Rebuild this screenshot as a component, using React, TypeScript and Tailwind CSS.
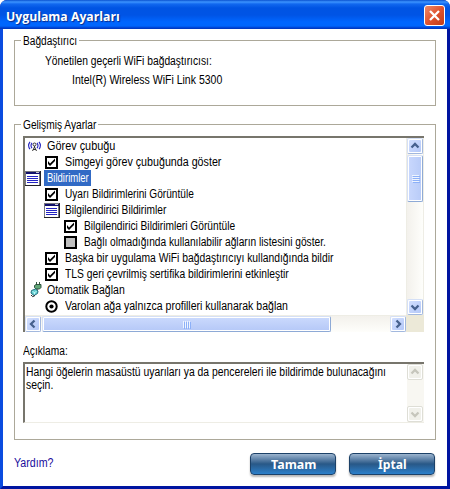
import { useLayoutEffect, useRef, useState, type ReactNode } from "react";

/** Single line label squeezed to the narrow widths of the dialog font. */
function Fit({ w, children, className = "" }: { w: number; children: string; className?: string }) {
  const ref = useRef<HTMLSpanElement>(null);
  const [scale, setScale] = useState(1);
  useLayoutEffect(() => {
    if (ref.current && ref.current.offsetWidth > 0) setScale(w / ref.current.offsetWidth);
  }, [w, children]);
  return (
    <span className={`block shrink-0 whitespace-nowrap ${className}`} style={{ width: w }}>
      <span ref={ref} className="inline-block origin-left" style={{ transform: `scaleX(${scale})` }}>
        {children}
      </span>
    </span>
  );
}

function Check({ off = false }: { off?: boolean }) {
  return (
    <svg width="13" height="13" viewBox="0 0 13 13" className="shrink-0">
      <rect x="1" y="1" width="11" height="11" fill={off ? "#c0c0c0" : "#fff"} stroke="#000" strokeWidth="2" />
      {!off && <path d="M3 5v3l2 2 5-5V2.500L5 7.500z" fill="#000" />}
    </svg>
  );
}

function Radio() {
  return (
    <svg width="13" height="13" viewBox="0 0 13 13" className="shrink-0">
      <circle cx="6.500" cy="6.500" r="5.200" fill="#fff" stroke="#000" strokeWidth="2" />
      <circle cx="6.500" cy="6.500" r="2.100" fill="#000" />
    </svg>
  );
}

function ListIcon() {
  return (
    <svg width="16" height="15" viewBox="0 0 16 15" className="shrink-0" shapeRendering="crispEdges">
      <rect width="16" height="15" fill="#222228" />
      <rect width="15" height="14" fill="#77777f" />
      <rect x="1" y="1" width="14" height="2" fill="#10106c" />
      <rect x="11" y="1" width="3" height="1" fill="#c8c8d8" />
      <rect x="1" y="3" width="13" height="11" fill="#fff" />
      <path d="M2 5.500h11M2 7.500h11M2 9.500h11M2 11.500h11" stroke="#2424c4" />
    </svg>
  );
}

function AntennaIcon() {
  return (
    <svg width="13" height="11" viewBox="0 0 13 11" className="shrink-0" fill="none">
      <path
        d="M2 .8Q-.8 4.500 2 8.200M4 1.800Q2 4.500 4 7.200M11 .8Q13.800 4.500 11 8.200M9 1.800Q11 4.500 9 7.200"
        stroke="#2222c0"
        strokeWidth="1.100"
      />
      <circle cx="6.500" cy="3.500" r="1.500" stroke="#333" />
      <path d="M6.500 5V7M6.500 6L4.500 10M6.500 6L8.500 10M5 8.500h3" stroke="#333" />
    </svg>
  );
}

function PlugIcon() {
  return (
    <svg width="12" height="16" viewBox="0 0 12 16" className="shrink-0">
      <path d="M6.500 0v3M9.500 0v3" stroke="#355c42" />
      <path d="M4.500 3.500L6 2.500h5v3L9.500 7H6L4.500 5.500z" fill="#62a878" stroke="#264535" strokeWidth=".9" />
      <path d="M7 7v2.500" stroke="#333" />
      <path d="M1.500 8.500L5.500 7l2.500 2-.5 2.500-3.500 2L1 11z" fill="#62cfd0" stroke="#267080" />
      <path d="M2.500 9.500l2 1 2-1M4.500 10.500v2" stroke="#d5ffff" strokeWidth=".8" fill="none" />
      <path d="M5 13.500Q2.500 16 1 13" stroke="#222" fill="none" />
    </svg>
  );
}

const arrows = {
  up: "M4.500 9.500L8 6L11.500 9.500",
  down: "M4.500 6.500L8 10L11.500 6.500",
  left: "M9.500 4.500L6 8L9.500 11.500",
  right: "M6.500 4.500L10 8L6.500 11.500",
};

function ScrollButton({ dir, disabled = false }: { dir: keyof typeof arrows; disabled?: boolean }) {
  return (
    <div
      className={`h-4 w-4 shrink-0 rounded-[2px] border p-px ${
        disabled ? "border-[#deded6] bg-white" : "border-[#d5e0f6] border-r-[#a2b8de] border-b-[#a2b8de] bg-white"
      }`}
    >
      <div
        className={`flex h-3 w-3 items-center justify-center rounded-[1px] ${
          disabled ? "bg-[#f0f0ea]" : "bg-linear-to-br from-[#d2dffe] to-[#b4c8f8]"
        }`}
      >
        <svg width="16" height="16" viewBox="0 0 16 16" className="shrink-0" fill="none">
          <path d={arrows[dir]} stroke={disabled ? "#c6c6bc" : "#46618e"} strokeWidth="2.300" />
        </svg>
      </div>
    </div>
  );
}

function Row({ pad, children, gap }: { pad: string; children: ReactNode; gap: string }) {
  return <div className={`flex h-4 items-center ${pad} ${gap}`}>{children}</div>;
}

function Group({ title, w, className, children }: { title: string; w: number; className: string; children: ReactNode }) {
  return (
    <section className={`ml-[11px] w-[422px] border border-[#aca899] ${className}`}>
      <div className="-mt-2 ml-[6px] flex h-4 w-fit items-center bg-white px-[2px]">
        <Fit w={w}>{title}</Fit>
      </div>
      {children}
    </section>
  );
}

function ActionButton({ label, w }: { label: string; w: number }) {
  return (
    <button className="flex h-[22px] w-[86px] items-center justify-center rounded-[4px] border border-[#1c4168] bg-linear-to-b from-[#9db5cf] from-0% via-[#285887] via-50% to-[#2b80cb] to-100% font-['Noto_Sans','Open_Sans',sans-serif] text-[13px] leading-[20px] font-bold text-white shadow-[0_2px_2px_#b8b8b8]">
      <Fit w={w}>{label}</Fit>
    </button>
  );
}

export default function App() {
  return (
    <div className="h-[489px] w-[450px] bg-white">
      <main className="flex h-[489px] w-[450px] flex-col overflow-hidden rounded-t-[7px] bg-[#0018a8] font-['Liberation_Sans',Arial,sans-serif] text-[12px] leading-4 text-black">
        <header className="flex h-[29px] shrink-0 items-center justify-between bg-[linear-gradient(to_bottom,#0a52d0_0px,#3c94ff_2px,#1168ef_4px,#0054e3_8px,#0054e5_15px,#0066ff_22px,#0066fc_26px,#003dcc_28px,#0036b8_29px)] pr-[5px] pl-[6px]">
          <h1 className="pt-[3px] font-['Open_Sans',sans-serif] text-[13px] leading-5 font-bold text-white [text-shadow:1px_1px_1px_#0a2a88]">
            <Fit w={114}>Uygulama Ayarları</Fit>
          </h1>
          <button className="mt-[2px] flex h-[21px] w-[21px] items-center justify-center rounded-[3px] border border-white bg-linear-to-br from-[#ec8868] via-[#e0532f] to-[#c03c18]">
            <svg width="19" height="19" viewBox="0 0 19 19">
              <path d="M5 5l9 9M14 5l-9 9" stroke="#fff" strokeWidth="2.300" />
            </svg>
          </button>
        </header>

        <div className="flex grow border-r-[3px] border-b-[3px] border-l-[3px] border-r-[#0014a0] border-b-[#0014a0] border-l-[#0b4ce0] bg-white">
          <div className="w-full pt-[11px]">
            <Group title="Bağdaştırıcı" w={54} className="h-[66px]">
              <div className="mt-[4px] ml-[30px]">
                <Fit w={167}>Yönetilen geçerli WiFi bağdaştırıcısı:</Fit>
              </div>
              <div className="mt-[3px] ml-[57px]">
                <Fit w={150}>Intel(R) Wireless WiFi Link 5300</Fit>
              </div>
            </Group>

            <Group title="Gelişmiş Ayarlar" w={73} className="mt-[18px] h-[316px]">
              <div className="mt-[3px] ml-[8px] flex h-[196px] w-[401px] flex-col border-t-2 border-l-2 border-t-[#77756c] border-l-[#77756c]">
                <div className="flex h-[177px]">
                  <div className="w-[381px]">
                    <Row pad="pl-[3px]" gap="gap-[6px]"><AntennaIcon /><Fit w={68}>Görev çubuğu</Fit></Row>
                    <Row pad="pl-[20px]" gap="gap-[7px]"><Check /><Fit w={156}>Simgeyi görev çubuğunda göster</Fit></Row>
                    <Row pad="" gap="gap-[3px]">
                      <ListIcon />
                      <div className="h-4 bg-[#316ac5] pr-[2px] pl-[3px] text-white"><Fit w={42}>Bildirimler</Fit></div>
                    </Row>
                    <Row pad="pl-[20px]" gap="gap-[7px]"><Check /><Fit w={129}>Uyarı Bildirimlerini Görüntüle</Fit></Row>
                    <Row pad="pl-[19px]" gap="gap-[5px]"><ListIcon /><Fit w={101}>Bilgilendirici Bildirimler</Fit></Row>
                    <Row pad="pl-[39px]" gap="gap-[7px]"><Check /><Fit w={151}>Bilgilendirici Bildirimleri Görüntüle</Fit></Row>
                    <Row pad="pl-[39px]" gap="gap-[7px]"><Check off /><Fit w={242}>Bağlı olmadığında kullanılabilir ağların listesini göster.</Fit></Row>
                    <Row pad="pl-[20px]" gap="gap-[7px]"><Check /><Fit w={268}>Başka bir uygulama WiFi bağdaştırıcıyı kullandığında bildir</Fit></Row>
                    <Row pad="pl-[20px]" gap="gap-[7px]"><Check /><Fit w={224}>TLS geri çevrilmiş sertifika bildirimlerini etkinleştir</Fit></Row>
                    <Row pad="pl-[5px]" gap="gap-[5px]"><PlugIcon /><Fit w={78}>Otomatik Bağlan</Fit></Row>
                    <Row pad="pl-[20px]" gap="gap-[7px]"><Radio /><Fit w={223}>Varolan ağa yalnızca profilleri kullanarak bağlan</Fit></Row>
                  </div>
                  <div className="flex w-[18px] flex-col border-r border-l border-[#eeede5] bg-linear-to-r from-[#f3f1ec] to-[#fefefb]">
                    <ScrollButton dir="up" />
                    <div className="mt-px flex h-[47px] w-4 flex-col items-center justify-center gap-px rounded-[2px] border border-[#d5e0f6] border-r-[#8eaad6] border-b-[#8eaad6] bg-linear-to-r from-[#c9d8fd] to-[#b8cbf8] shadow-[inset_0_0_0_1px_#fff]">
                      {[0, 1, 2, 3].map((i) => (
                        <i key={i} className="h-px w-[7px] bg-[#eef4fe] shadow-[1px_1px_0_#8cb0f8]" />
                      ))}
                    </div>
                    <div className="grow" />
                    <ScrollButton dir="down" />
                  </div>
                </div>
                <div className="flex h-[17px] bg-[#ece9d8]">
                  <div className="flex w-[381px] border-t border-[#eeede5] bg-linear-to-b from-[#f3f1ec] to-[#fefefb]">
                    <ScrollButton dir="left" />
                    <div className="ml-px flex h-4 w-[289px] items-center justify-center gap-px rounded-[2px] border border-[#d5e0f6] border-r-[#8eaad6] border-b-[#8eaad6] bg-linear-to-b from-[#cbdafd] to-[#b5c8f7] shadow-[inset_0_0_0_1px_#fff]">
                      {[0, 1, 2, 3].map((i) => (
                        <i key={i} className="h-[7px] w-px bg-[#eef4fe] shadow-[1px_1px_0_#8cb0f8]" />
                      ))}
                    </div>
                    <div className="grow" />
                    <ScrollButton dir="right" />
                  </div>
                </div>
              </div>

              <div className="mt-[11px] ml-[8px]">
                <Fit w={45}>Açıklama:</Fit>
              </div>
              <div className="mt-[3px] ml-[8px] flex h-[61px] w-[401px] border-t-2 border-b border-l-2 border-t-[#77756c] border-b-[#eeede5] border-l-[#77756c] leading-[13px]">
                <div className="w-[382px] pt-[2px] pl-px">
                  <Fit w={360}>Hangi öğelerin masaüstü uyarıları ya da pencereleri ile bildirimde bulunacağını</Fit>
                  <Fit w={27}>seçin.</Fit>
                </div>
                <div className="flex w-[17px] flex-col justify-between bg-[#f8f7f2]">
                  <ScrollButton dir="up" disabled />
                  <ScrollButton dir="down" disabled />
                </div>
              </div>
            </Group>

            <footer className="mt-[13px] ml-[11px] flex h-[22px] w-[421px] items-center">
              <a className="mt-[-3px] mr-auto text-[#200c9c]"><Fit w={39}>Yardım?</Fit></a>
              <div className="flex gap-[13px]">
                <ActionButton label="Tamam" w={45} />
                <ActionButton label="İptal" w={29} />
              </div>
            </footer>
          </div>
        </div>
      </main>
    </div>
  );
}
